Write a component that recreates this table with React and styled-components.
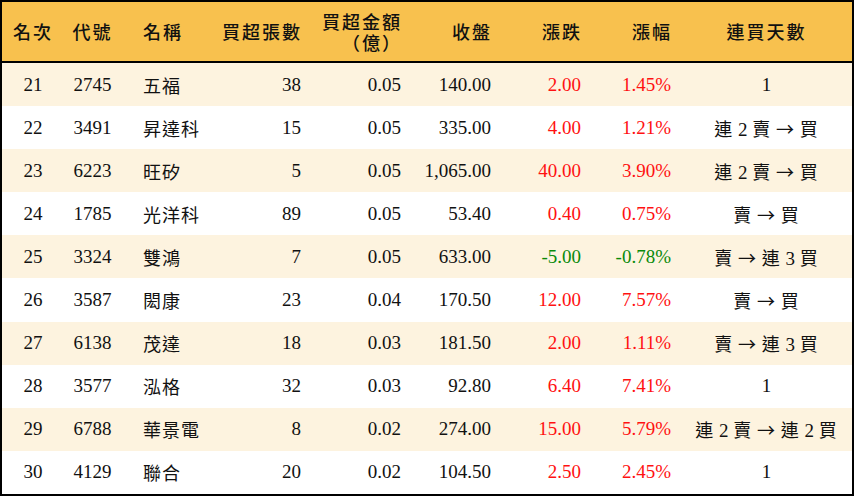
import React from "react";
import styled, { createGlobalStyle } from "styled-components";

const GlobalStyle = createGlobalStyle`
  html, body {
    margin: 0;
    padding: 0;
    background: #ffffff;
  }
`;

const columns = [
  { key: "rank", title: "名次", align: "center" },
  { key: "code", title: "代號", align: "center" },
  { key: "name", title: "名稱", align: "left" },
  { key: "lots", title: "買超張數", align: "right" },
  { key: "amount", title: ["買超金額", "（億）"], align: "right" },
  { key: "close", title: "收盤", align: "right" },
  { key: "change", title: "漲跌", align: "right", colored: true },
  { key: "pct", title: "漲幅", align: "right", colored: true },
  { key: "streak", title: "連買天數", align: "center" },
];

const rows = [
  ["21", "2745", "五福", "38", "0.05", "140.00", "2.00", "1.45%", "1"],
  ["22", "3491", "昇達科", "15", "0.05", "335.00", "4.00", "1.21%", "連 2 賣 → 買"],
  ["23", "6223", "旺矽", "5", "0.05", "1,065.00", "40.00", "3.90%", "連 2 賣 → 買"],
  ["24", "1785", "光洋科", "89", "0.05", "53.40", "0.40", "0.75%", "賣 → 買"],
  ["25", "3324", "雙鴻", "7", "0.05", "633.00", "-5.00", "-0.78%", "賣 → 連 3 買"],
  ["26", "3587", "閎康", "23", "0.04", "170.50", "12.00", "7.57%", "賣 → 買"],
  ["27", "6138", "茂達", "18", "0.03", "181.50", "2.00", "1.11%", "賣 → 連 3 買"],
  ["28", "3577", "泓格", "32", "0.03", "92.80", "6.40", "7.41%", "1"],
  ["29", "6788", "華景電", "8", "0.02", "274.00", "15.00", "5.79%", "連 2 賣 → 連 2 買"],
  ["30", "4129", "聯合", "20", "0.02", "104.50", "2.50", "2.45%", "1"],
];

const gridColumns = "62px 57px 79px 111px 100px 90px 90px 90px 1fr";

const Table = styled.div`
  width: 854px;
  height: 496px;
  box-sizing: border-box;
  border: 2px solid #000000;
  display: flex;
  flex-direction: column;
  font-family: "Liberation Serif", "Noto Sans CJK TC", serif;
  color: #111111;
`;

const HeaderRow = styled.div`
  display: grid;
  grid-template-columns: ${gridColumns};
  height: 61px;
  box-sizing: border-box;
  background: #f8c14e;
  border-bottom: 2px solid #000000;
`;

const HeadCell = styled.div`
  display: flex;
  flex-direction: column;
  justify-content: center;
  align-items: ${(p) =>
    p.$align === "left" ? "flex-start" : p.$align === "right" ? "flex-end" : "center"};
  padding: ${(p) => (p.$align === "left" ? "0 0 0 22px" : p.$align === "right" ? "0 9px 0 0" : "0")};
  padding-top: 4px;
  font-size: 18px;
  font-weight: 500;
  letter-spacing: 2px;
  line-height: 21px;
`;

const Body = styled.div`
  flex: 1;
  display: flex;
  flex-direction: column;
`;

const DataRow = styled.div`
  flex: 1;
  display: grid;
  grid-template-columns: ${gridColumns};
  align-items: center;
  background: ${(p) => (p.$striped ? "#fdf3df" : "#ffffff")};
`;

const Cell = styled.div`
  text-align: ${(p) => p.$align};
  padding: ${(p) => (p.$align === "left" ? "0 0 0 22px" : p.$align === "right" ? "0 10px 0 0" : "0")};
  font-size: 19px;
  white-space: nowrap;
  color: ${(p) => (p.$tone === "up" ? "#ff1111" : p.$tone === "down" ? "#0a8a0a" : "#111111")};
`;

const Cjk = styled.span`
  font-family: "Noto Sans CJK TC", sans-serif;
  font-size: 18px;
  letter-spacing: 1px;
`;

function renderText(text) {
  // CJK runs and the arrow go to the CJK face, digits stay in Times
  const parts = text.split(/([\u2190-\u21ff\u3400-\u9fff]+)/);
  return parts.map((part, i) =>
    /[\u2190-\u21ff\u3400-\u9fff]/.test(part) ? <Cjk key={i}>{part}</Cjk> : part
  );
}

function toneOf(col, value) {
  if (!col.colored) return null;
  return value.startsWith("-") ? "down" : "up";
}

export default function App() {
  return (
    <>
      <GlobalStyle />
      <Table>
        <HeaderRow>
          {columns.map((col) => (
            <HeadCell key={col.key} $align={col.align}>
              {Array.isArray(col.title)
                ? col.title.map((line) => <span key={line}>{line}</span>)
                : col.title}
            </HeadCell>
          ))}
        </HeaderRow>
        <Body>
          {rows.map((row, i) => (
            <DataRow key={row[0]} $striped={i % 2 === 0}>
              {row.map((value, j) => (
                <Cell key={j} $align={columns[j].align} $tone={toneOf(columns[j], value)}>
                  {renderText(value)}
                </Cell>
              ))}
            </DataRow>
          ))}
        </Body>
      </Table>
    </>
  );
}
